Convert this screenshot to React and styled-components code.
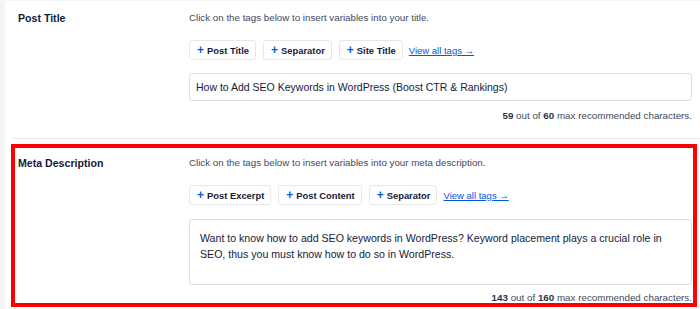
import React from 'react';
import styled, { createGlobalStyle } from 'styled-components';

const GlobalStyle = createGlobalStyle`
  html, body {
    margin: 0;
    padding: 0;
    background: #f3f4f6;
  }
  body {
    font-family: "Liberation Sans", Arial, sans-serif;
    -webkit-font-smoothing: antialiased;
  }
`;

const Card = styled.div`
  margin: 1px 0 0 5px;
  height: 308px;
  background: #fff;
  overflow: hidden;
`;

const Section = styled.div`
  display: grid;
  grid-template-columns: 171px 503px;
  margin: ${p => (p.highlight ? '5px 3px 0 6px' : '0 0 0 7px')};
  padding: ${p => (p.highlight ? '7px 1px 0 3px' : '9px 8px 15px 6px')};
  border: ${p => (p.highlight ? '4px solid #ff0000' : 'none')};
  border-bottom: ${p => (p.highlight ? '4px solid #ff0000' : '1px solid #e8e8eb')};
  box-sizing: border-box;
  height: ${p => (p.highlight ? '163px' : '138px')};
`;

const Label = styled.div`
  font-size: 10.6px;
  font-weight: 700;
  line-height: 16px;
  color: #141b38;
`;

const Content = styled.div`
  display: flex;
  flex-direction: column;
`;

const Hint = styled.div`
  font-size: 9.75px;
  line-height: 16px;
  color: #434960;
`;

const Tags = styled.div`
  display: flex;
  align-items: center;
  gap: 7px;
  margin-top: 14px;
`;

const Tag = styled.button`
  display: flex;
  align-items: center;
  gap: 3px;
  height: 20px;
  padding: 0 6px 0 7px;
  border: 1px solid #e6e7ea;
  border-radius: 3px;
  background: #fff;
  font-family: inherit;
  font-size: 9.4px;
  font-weight: 700;
  color: #141b38;
  cursor: pointer;
`;

const Plus = styled.span`
  color: #005ae0;
  font-size: 12px;
  font-weight: 700;
  line-height: 12px;
`;

const ViewAll = styled.a`
  font-size: 9.5px;
  color: #005ae0;
  text-decoration: underline;
  margin-left: -1px;
`;

const Field = styled.div`
  margin-top: ${p => (p.multiline ? '14px' : '13px')};
  height: ${p => (p.multiline ? '66px' : '28px')};
  box-sizing: border-box;
  border: 1px solid #dfe0e4;
  border-radius: 3px;
  padding: ${p => (p.multiline ? '10px 10px 0 10px' : '0 6px')};
  display: flex;
  align-items: ${p => (p.multiline ? 'flex-start' : 'center')};
  font-size: ${p => (p.multiline ? '10.6px' : '10.5px')};
  line-height: 16px;
  color: #141b38;
`;

const Counter = styled.div`
  margin-top: ${p => p.gap}px;
  text-align: right;
  font-size: 9.8px;
  line-height: ${p => p.lh}px;
  color: #434960;

  b {
    color: #2c324c;
    font-weight: 700;
  }
`;

function TagList({ tags }) {
  return (
    <Tags>
      {tags.map(t => (
        <Tag key={t}>
          <Plus>+</Plus>
          {t}
        </Tag>
      ))}
      <ViewAll href="#">View all tags →</ViewAll>
    </Tags>
  );
}

export default function App() {
  return (
    <>
      <GlobalStyle />
      <Card>
        <Section>
          <Label>Post Title</Label>
          <Content>
            <Hint>Click on the tags below to insert variables into your title.</Hint>
            <TagList tags={['Post Title', 'Separator', 'Site Title']} />
            <Field>How to Add SEO Keywords in WordPress (Boost CTR &amp; Rankings)</Field>
            <Counter gap={8} lh={14}>
              <b>59</b> out of <b>60</b> max recommended characters.
            </Counter>
          </Content>
        </Section>
        <Section highlight>
          <Label>Meta Description</Label>
          <Content>
            <Hint>Click on the tags below to insert variables into your meta description.</Hint>
            <TagList tags={['Post Excerpt', 'Post Content', 'Separator']} />
            <Field multiline>
              Want to know how to add SEO keywords in WordPress? Keyword placement plays a crucial role in
              SEO, thus you must know how to do so in WordPress.
            </Field>
            <Counter gap={7} lh={11}>
              <b>143</b> out of <b>160</b> max recommended characters.
            </Counter>
          </Content>
        </Section>
      </Card>
    </>
  );
}
